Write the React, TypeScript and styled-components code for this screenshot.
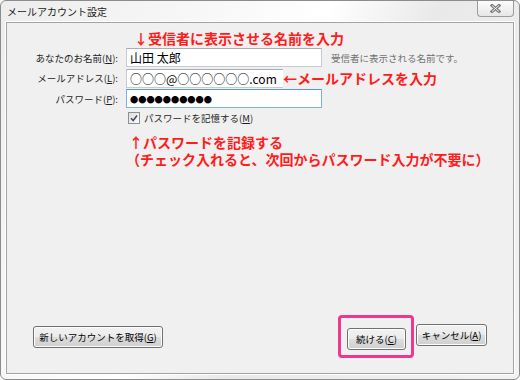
import styled, { createGlobalStyle } from "styled-components";

const GlobalStyle = createGlobalStyle`
    html, body {
        margin: 0;
        padding: 0;
    }
    body {
        width: 520px;
        height: 380px;
        overflow: hidden;
        background: #ffffff;
        font-family: "Noto Sans CJK JP", "Noto Sans", sans-serif;
    }
`;

const Window = styled.div`
    box-sizing: border-box;
    width: 520px;
    height: 380px;
    display: flex;
    flex-direction: column;
    padding: 0 5px 5px 5px;
    border: 1px solid #8c8c8c;
    border-radius: 6px;
    background: linear-gradient(
        120deg,
        #ededed 0%,
        #f8f8f8 30%,
        #ffffff 45%,
        #e9e9e9 60%,
        #f3f3f3 100%
    );
`;

const TitleBar = styled.div`
    height: 21px;
    display: flex;
    justify-content: space-between;
    align-items: flex-start;
`;

const Title = styled.div`
    padding: 3px 0 0 1px;
    font-size: 10px;
    line-height: 16px;
    color: #1a1a1a;
`;

const CloseButton = styled.div`
    box-sizing: border-box;
    width: 37px;
    height: 16px;
    display: flex;
    align-items: center;
    justify-content: center;
    border: 1px solid #9c9c9c;
    border-top: none;
    border-radius: 0 0 4px 4px;
    background: linear-gradient(#fdfdfd, #e6e6e6);
`;

const Panel = styled.div`
    flex: 1;
    display: flex;
    flex-direction: column;
    border: 1px solid #a3a3a3;
    box-shadow: 0 0 0 1px #ffffff;
    background: #f0f0f0;
`;

const Note = styled.div<{ $indent: number }>`
    margin-left: ${(p) => p.$indent}px;
    font-size: 14px;
    line-height: 17px;
    font-weight: 700;
    color: #ff1c1c;
    white-space: nowrap;
`;

const TopNote = styled(Note)`
    margin-top: 7px;
    margin-bottom: 1px;
`;

const BlockNote = styled(Note)`
    margin-top: 9px;
    text-indent: 3px;
`;

const Form = styled.div`
    display: grid;
    grid-template-columns: 112px 196px 1fr;
    grid-auto-rows: 19px;
    column-gap: 7px;
    row-gap: 1.5px;
    align-items: center;
`;

const Label = styled.label`
    justify-self: end;
    padding-right: 1px;
    font-size: 9.5px;
    color: #1e1e1e;
    white-space: nowrap;
`;

const Field = styled.input<{ $focused?: boolean }>`
    box-sizing: border-box;
    width: 196px;
    height: 19px;
    margin: 0;
    padding: 0 3px;
    border: 1px solid ${(p) => (p.$focused ? "#7fb0e0" : "#c4cbd4")};
    border-top-color: ${(p) => (p.$focused ? "#5d98d2" : "#abadb3")};
    background: #ffffff;
    font-family: "Noto Sans CJK JP", sans-serif;
    font-size: 12px;
    color: #000000;
    outline: none;
`;

const Dots = styled(Field)`
    font-size: 8.2px;
    letter-spacing: 0;
`;

const Hint = styled.span`
    margin-left: 2px;
    font-size: 9.5px;
    color: #707070;
    white-space: nowrap;
`;

const NoteOver = styled(Note)`
    grid-column: 3;
    margin-left: -46px;
    line-height: 19px;
    background: #f0f0f0;
`;

const CheckRow = styled.div`
    margin: 3px 0 0 121px;
    display: flex;
    align-items: center;
    gap: 4px;
    font-size: 9.5px;
    color: #1e1e1e;
`;

const Box = styled.span`
    box-sizing: border-box;
    width: 12px;
    height: 12px;
    display: inline-flex;
    align-items: center;
    justify-content: center;
    border: 1px solid #8e8f8f;
    background: linear-gradient(135deg, #dcdcdc, #fdfdfd);
`;

const Spacer = styled.div`
    flex: 1;
`;

const ButtonRow = styled.div`
    display: flex;
    justify-content: space-between;
    align-items: center;
    padding: 0 26px 23px 26px;
`;

const ButtonGroup = styled.div`
    display: flex;
    gap: 10px;
`;

const Button = styled.button<{ $w: number }>`
    box-sizing: border-box;
    width: ${(p) => p.$w}px;
    height: 22px;
    margin: 0;
    padding: 0;
    border: 1px solid #707070;
    border-radius: 3px;
    background: linear-gradient(#f2f2f2 0%, #ebebeb 50%, #dddddd 51%, #cfcfcf 100%);
    box-shadow: inset 0 0 0 1px #fcfcfc;
    font-family: "Noto Sans CJK JP", sans-serif;
    font-size: 9.5px;
    color: #000000;
    white-space: nowrap;
`;

const Highlight = styled.div`
    position: relative;
    &::after {
        content: "";
        position: absolute;
        top: -9px;
        left: -9px;
        right: -8px;
        bottom: -8px;
        border: 3px solid #f0388f;
        border-radius: 4px;
        pointer-events: none;
    }
`;

const CloseIcon = () => (
    <svg width="11" height="9" viewBox="0 0 11 9">
        <path d="M2 1.5 L9 7.5 M9 1.5 L2 7.5" stroke="#7a7a7a" strokeWidth="3" strokeLinecap="square" />
        <path d="M2 1.5 L9 7.5 M9 1.5 L2 7.5" stroke="#f4f4f4" strokeWidth="1" />
    </svg>
);

const CheckIcon = () => (
    <svg width="8" height="8" viewBox="0 0 8 8">
        <path d="M1 4.2 L3.2 6.5 L7 1.5" stroke="#3b4b66" strokeWidth="1.5" fill="none" />
    </svg>
);

const App = () => {
    return (
        <>
            <GlobalStyle />
            <Window>
                <TitleBar>
                    <Title>メールアカウント設定</Title>
                    <CloseButton>
                        <CloseIcon />
                    </CloseButton>
                </TitleBar>
                <Panel>
                    <TopNote $indent={127}>↓受信者に表示させる名前を入力</TopNote>
                    <Form>
                        <Label>
                            あなたのお名前(<u>N</u>):
                        </Label>
                        <Field readOnly value="山田 太郎" />
                        <Hint>受信者に表示される名前です。</Hint>

                        <Label>
                            メールアドレス(<u>L</u>):
                        </Label>
                        <Field readOnly value="○○○@○○○○○○.com" />
                        <NoteOver $indent={0}>←メールアドレスを入力</NoteOver>

                        <Label>
                            パスワード(<u>P</u>):
                        </Label>
                        <Dots $focused readOnly value="●●●●●●●●●●" />
                        <span />
                    </Form>
                    <CheckRow>
                        <Box>
                            <CheckIcon />
                        </Box>
                        <span>
                            パスワードを記憶する(<u>M</u>)
                        </span>
                    </CheckRow>
                    <BlockNote $indent={119}>
                        ↑パスワードを記録する
                        <br />
                        （チェック入れると、次回からパスワード入力が不要に）
                    </BlockNote>
                    <Spacer />
                    <ButtonRow>
                        <Button $w={130}>
                            新しいアカウントを取得(<u>G</u>)
                        </Button>
                        <ButtonGroup>
                            <Highlight>
                                <Button $w={59}>
                                    続ける(<u>C</u>)
                                </Button>
                            </Highlight>
                            <Button $w={71}>
                                キャンセル(<u>A</u>)
                            </Button>
                        </ButtonGroup>
                    </ButtonRow>
                </Panel>
            </Window>
        </>
    );
};

export default App;
